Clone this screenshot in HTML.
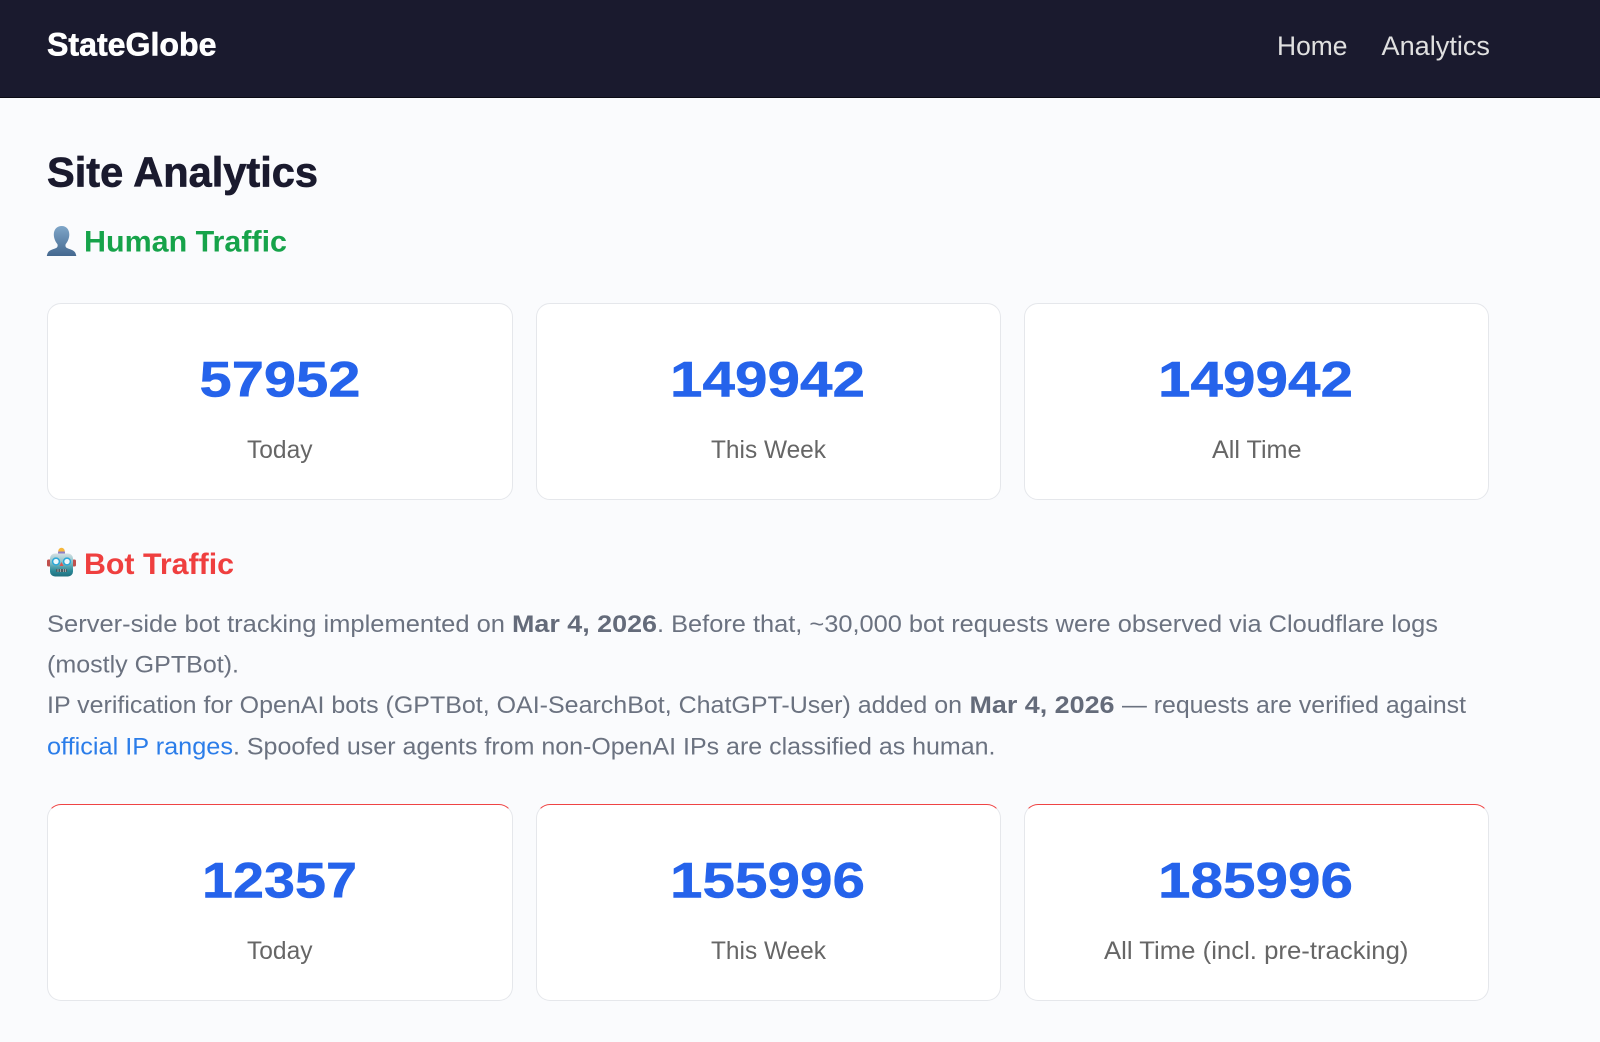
<!DOCTYPE html>
<html lang="en">
<head>
<meta charset="utf-8">
<title>Site Analytics - StateGlobe</title>
<style>
html,body{margin:0;padding:0;width:1600px;height:1042px;overflow:hidden;background:#fafbfd;}
header{position:absolute;left:0;top:0;width:1600px;height:97px;background:#1a1a2e;border-bottom:1px solid #0b0b14;}
.card{position:absolute;box-sizing:border-box;width:465.500px;height:197.500px;background:#fff;border:1.5px solid #e5e7eb;border-radius:14px;}
.bot{top:803.500px;border-top:1.5px solid #ef4444;}
.hum{top:302.500px;}
svg.t{position:absolute;left:0;top:0;}
text{font-family:"Liberation Sans",sans-serif;white-space:pre;}
.b{font-weight:700;}
.p{font-size:24.5px;fill:#6b7280;}
.pb{font-size:24.5px;fill:#646b7a;font-weight:700;}
.n{font-size:50px;font-weight:700;fill:#2563eb;stroke:#2563eb;stroke-width:.5px;}
.l{font-size:25px;fill:#666;}
.nav{font-size:27px;fill:#e0e0e0;}
</style>
</head>
<body>
<header></header>
<div class="card hum" style="left:47px"></div>
<div class="card hum" style="left:535.500px"></div>
<div class="card hum" style="left:1023.500px"></div>
<div class="card bot" style="left:47px"></div>
<div class="card bot" style="left:535.500px"></div>
<div class="card bot" style="left:1023.500px"></div>
<svg class="t" width="1600" height="1042" viewBox="0 0 1600 1042" xmlns="http://www.w3.org/2000/svg">
<defs>
<linearGradient id="pg" x1="0" y1="0" x2="0" y2="1"><stop offset="0" stop-color="#7fa6c9"/><stop offset="1" stop-color="#44688f"/></linearGradient>
<linearGradient id="rg" x1="0" y1="0" x2="0" y2="1"><stop offset="0" stop-color="#d5dfe2"/><stop offset=".35" stop-color="#8cc4cc"/><stop offset=".75" stop-color="#2c8a99"/><stop offset="1" stop-color="#1e6f7e"/></linearGradient>
</defs>
<text class="b" x="47" y="55.500" font-size="32.5" fill="#fff" stroke="#fff" stroke-width=".6" textLength="169.500" lengthAdjust="spacingAndGlyphs">StateGlobe</text>
<text class="nav" x="1277" y="55" textLength="70.500" lengthAdjust="spacingAndGlyphs">Home</text>
<text class="nav" x="1381.500" y="55" textLength="108.500" lengthAdjust="spacingAndGlyphs">Analytics</text>

<text class="b" x="47" y="186.500" font-size="42" fill="#1a1a2e" stroke="#1a1a2e" stroke-width=".7" textLength="271" lengthAdjust="spacingAndGlyphs">Site Analytics</text>

<g transform="translate(.3,.5)">
<path d="M61.500 225.500c-5 0-8 3.500-8 8.500 0 3.500 1.500 7 3.500 9.500.6.800.5 3-.7 3.700-2.500 1.400-7 2-8.500 4.600-.6 1-1 2.200-1.300 3.700h29.500c-.3-1.500-.7-2.700-1.300-3.700-1.500-2.600-6-3.200-8.500-4.600-1.200-.7-1.300-2.900-.7-3.700 2-2.500 3.500-6 3.500-9.500 0-5-3-8.500-7.500-8.500z" fill="url(#pg)"/>
</g>
<text class="b" x="84" y="251.500" font-size="30" fill="#16a34a" textLength="203" lengthAdjust="spacingAndGlyphs">Human Traffic</text>

<g transform="translate(0,.5)">
<circle cx="61.500" cy="550.500" r="3.200" fill="#f6b73c"/>
<rect x="58" y="551" width="7" height="3" fill="#8f7fc4"/>
<rect x="47" y="559" width="4" height="7" rx="1.500" fill="#c0504d"/>
<rect x="72" y="559" width="4" height="7" rx="1.500" fill="#c0504d"/>
<rect x="50" y="553" width="23" height="23" rx="5" fill="url(#rg)"/>
<circle cx="56" cy="561" r="3.400" fill="#eef8fb" stroke="#2aa7d8" stroke-width="1.500"/>
<circle cx="67" cy="561" r="3.400" fill="#eef8fb" stroke="#2aa7d8" stroke-width="1.500"/>
<path d="M61.500 561.500l2 4h-4z" fill="#e0524d"/>
<rect x="56" y="568.500" width="11" height="3" rx="1" fill="#4a5a60"/>
<path d="M58 568.500v3M60.700 568.500v3M63.400 568.500v3M65.500 568.500v3" stroke="#cfd8da" stroke-width=".6"/>
</g>
<text class="b" x="84" y="574" font-size="30" fill="#ef3f3f" textLength="150" lengthAdjust="spacingAndGlyphs">Bot Traffic</text>

<text class="p" x="47" y="632" textLength="458" lengthAdjust="spacingAndGlyphs">Server-side bot tracking implemented on</text>
<text class="pb" x="512" y="632" textLength="145" lengthAdjust="spacingAndGlyphs">Mar 4, 2026</text>
<text class="p" x="657" y="632" textLength="781" lengthAdjust="spacingAndGlyphs">. Before that, ~30,000 bot requests were observed via Cloudflare logs</text>
<text class="p" x="47" y="672.500" textLength="192" lengthAdjust="spacingAndGlyphs">(mostly GPTBot).</text>
<text class="p" x="47" y="713" textLength="915" lengthAdjust="spacingAndGlyphs">IP verification for OpenAI bots (GPTBot, OAI-SearchBot, ChatGPT-User) added on</text>
<text class="pb" x="969.500" y="713" textLength="145" lengthAdjust="spacingAndGlyphs">Mar 4, 2026</text>
<text class="p" x="1122" y="713" textLength="344" lengthAdjust="spacingAndGlyphs">— requests are verified against</text>
<text x="47" y="754.500" font-size="24.500" fill="#2b7de9" textLength="186" lengthAdjust="spacingAndGlyphs">official IP ranges</text>
<text class="p" x="233" y="754.500" textLength="762.500" lengthAdjust="spacingAndGlyphs">. Spoofed user agents from non-OpenAI IPs are classified as human.</text>

<text class="n" x="199.500" y="396.500" textLength="161" lengthAdjust="spacingAndGlyphs">57952</text>
<text class="l" x="247" y="458" textLength="65.500" lengthAdjust="spacingAndGlyphs">Today</text>
<text class="n" x="670" y="396.500" textLength="195" lengthAdjust="spacingAndGlyphs">149942</text>
<text class="l" x="711" y="458" textLength="115" lengthAdjust="spacingAndGlyphs">This Week</text>
<text class="n" x="1158" y="396.500" textLength="195" lengthAdjust="spacingAndGlyphs">149942</text>
<text class="l" x="1212" y="458" textLength="89.500" lengthAdjust="spacingAndGlyphs">All Time</text>

<text class="n" x="202" y="897.500" textLength="155" lengthAdjust="spacingAndGlyphs">12357</text>
<text class="l" x="247" y="959" textLength="65.500" lengthAdjust="spacingAndGlyphs">Today</text>
<text class="n" x="670" y="897.500" textLength="195" lengthAdjust="spacingAndGlyphs">155996</text>
<text class="l" x="711" y="959" textLength="115" lengthAdjust="spacingAndGlyphs">This Week</text>
<text class="n" x="1158" y="897.500" textLength="195" lengthAdjust="spacingAndGlyphs">185996</text>
<text class="l" x="1104" y="959" textLength="304.500" lengthAdjust="spacingAndGlyphs">All Time (incl. pre-tracking)</text>
</svg>
</body>
</html>
